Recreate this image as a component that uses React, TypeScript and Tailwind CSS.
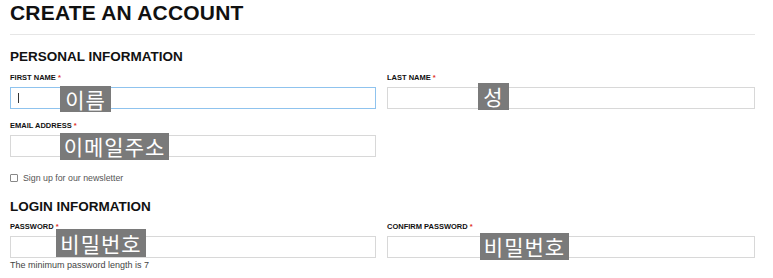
import React from 'react';

const head = { fontFamily: '"Liberation Sans", Arial, sans-serif' };
const ko = { fontFamily: '"Noto Sans CJK KR", "Noto Sans", sans-serif' };

const Tag = ({ text, className }: { text: string; className: string }) => (
  <span style={ko} className={`absolute flex items-center justify-center bg-[#7a7a7a] text-[21px] leading-none tracking-[1px] text-white ${className}`}>
    {text}
  </span>
);

const Label = ({ children }: { children: React.ReactNode }) => (
  <div style={head} className="mb-[5px] h-[8px] text-[7.5px] font-bold uppercase leading-[8px] text-[#111]">
    {children} <span className="text-[#e0301e]">*</span>
  </div>
);

const Field = ({ label, tag, tagClass, focused }: { label: string; tag: string; tagClass: string; focused?: boolean }) => (
  <div>
    <Label>{label}</Label>
    <div className="relative">
      <div className={`h-[22px] border bg-white ${focused ? 'border-[#8fc3ee]' : 'border-[#d8d8d8]'}`}>
        {focused && <div className="ml-[7px] mt-[5px] h-[10px] w-px bg-[#333]" />}
      </div>
      <Tag text={tag} className={tagClass} />
    </div>
  </div>
);

export default function App() {
  return (
    <div className="h-[278px] w-[773px] overflow-hidden bg-white pl-[10px] pr-[18px]">
      <h1 style={head} className="pt-[2px] text-[21px] font-bold leading-[22px] tracking-[0.2px] text-[#111]">
        CREATE AN ACCOUNT
      </h1>
      <div className="mt-[10px] h-px bg-[#e6e6e6]" />
      <h2 style={head} className="mt-[15px] text-[13.5px] font-bold leading-[14px] text-[#111]">PERSONAL INFORMATION</h2>
      <div className="mt-[10px] grid grid-cols-[366px_368px] gap-x-[11px]">
        <Field label="First Name" tag="이름" tagClass="left-[50px] top-[-1px] h-[26px] w-[51px]" focused />
        <Field label="Last Name" tag="성" tagClass="left-[91px] top-[-4px] h-[27px] w-[31px]" />
        <div className="mt-[13px]">
          <Field label="Email Address" tag="이메일주소" tagClass="left-[50px] top-[-2px] h-[27px] w-[109px]" />
        </div>
      </div>
      <label style={head} className="mt-[16px] flex items-center gap-[5px] text-[8.8px] leading-[10px] text-[#555]">
        <span className="h-[8px] w-[8px] rounded-[1px] border border-[#888]" />
        Sign up for our newsletter
      </label>
      <h2 style={head} className="mt-[17px] text-[13.5px] font-bold leading-[14px] text-[#111]">LOGIN INFORMATION</h2>
      <div className="mt-[9px] grid grid-cols-[366px_368px] gap-x-[11px]">
        <div>
          <Field label="Password" tag="비밀번호" tagClass="left-[46px] top-[-7px] h-[28px] w-[90px]" />
          <p style={head} className="mt-[2px] text-[9px] leading-[10px] text-[#444]">The minimum password length is 7</p>
        </div>
        <Field label="Confirm Password" tag="비밀번호" tagClass="left-[93px] top-[-3px] h-[27px] w-[89px]" />
      </div>
    </div>
  );
}
